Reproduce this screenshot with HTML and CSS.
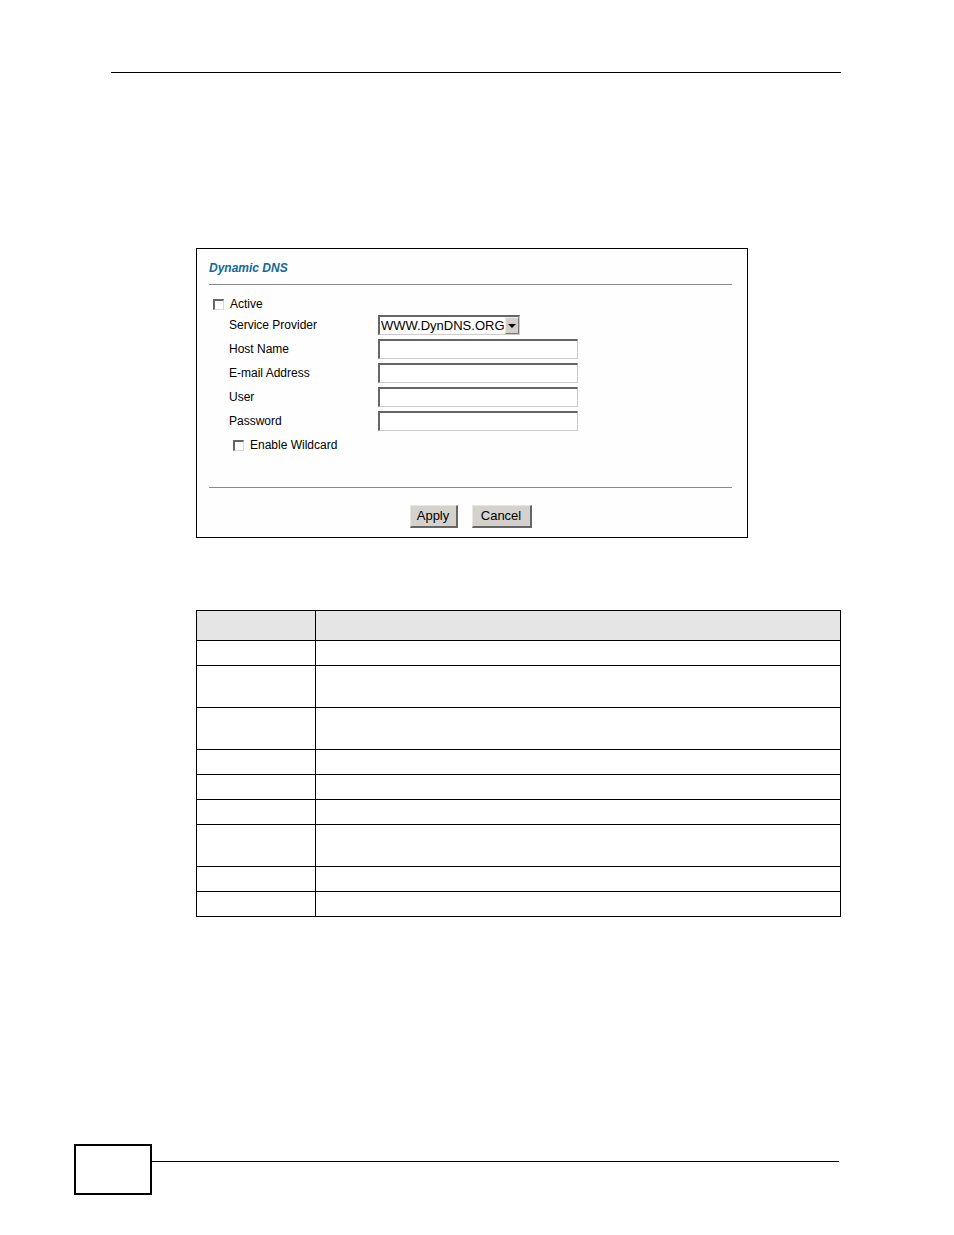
FILE: index.html
```html
<!DOCTYPE html>
<html lang="en">
<head>
<meta charset="utf-8">
<title>Dynamic DNS</title>
<link rel="stylesheet" href="styles.css">
</head>
<body>
<header class="page-header"></header>
<main class="content">
  <form class="panel">
    <h1 class="panel-title">Dynamic DNS</h1>
    <div class="panel-body">
      <div class="check-row">
        <input class="checkbox" type="checkbox" id="active">
        <label for="active">Active</label>
      </div>
      <div class="fields">
        <div class="field">
          <label for="provider">Service Provider</label>
          <span class="select-box">
            <select class="select" id="provider"><option>WWW.DynDNS.ORG</option></select>
            <svg class="select-arrow" viewBox="0 0 14 17" aria-hidden="true">
              <rect width="14" height="17" fill="#d4d0c8"/>
              <path d="M0.5 16.5V0.5H13.5" fill="none" stroke="#eeeeee"/>
              <path d="M0.5 16.5H13.5V0.5" fill="none" stroke="#777777"/>
              <path d="M3 7H11L7 11Z" fill="#000000"/>
            </svg>
          </span>
        </div>
        <div class="field">
          <label for="host">Host Name</label>
          <input class="text-input" type="text" id="host">
        </div>
        <div class="field">
          <label for="email">E-mail Address</label>
          <input class="text-input" type="text" id="email">
        </div>
        <div class="field">
          <label for="user">User</label>
          <input class="text-input" type="text" id="user">
        </div>
        <div class="field">
          <label for="password">Password</label>
          <input class="text-input" type="password" id="password">
        </div>
      </div>
      <div class="check-row check-row-nested">
        <input class="checkbox" type="checkbox" id="wildcard">
        <label for="wildcard">Enable Wildcard</label>
      </div>
    </div>
    <div class="actions">
      <button class="button" type="button">Apply</button>
      <button class="button button-wide" type="button">Cancel</button>
    </div>
  </form>
  <table class="reference">
    <colgroup><col class="label-col"><col></colgroup>
    <thead>
      <tr class="head-row"><th></th><th></th></tr>
    </thead>
    <tbody>
      <tr><td></td><td></td></tr>
      <tr class="tall"><td></td><td></td></tr>
      <tr class="tall"><td></td><td></td></tr>
      <tr><td></td><td></td></tr>
      <tr><td></td><td></td></tr>
      <tr><td></td><td></td></tr>
      <tr class="tall"><td></td><td></td></tr>
      <tr><td></td><td></td></tr>
      <tr><td></td><td></td></tr>
    </tbody>
  </table>
</main>
<footer class="page-footer">
  <div class="page-number"></div>
  <div class="footer-rule"></div>
</footer>
</body>
</html>
```

FILE: styles.css
```css
* {
  box-sizing: border-box;
}

body {
  display: flex;
  flex-direction: column;
  min-height: 100vh;
  margin: 0;
  padding: 72px 113px 40px 111px;
  background: #ffffff;
  color: #000000;
  font: 12px/16px "Liberation Sans", Arial, sans-serif;
}

.page-header {
  border-top: 1px solid #000000;
}

.content {
  flex: 1;
  padding: 175px 0 40px 85px;
}

.panel {
  max-width: 552px;
  padding: 11px 15px 9px 12px;
  border: 1px solid #000000;
  background: #fefefe;
}

.panel-title {
  margin: 0;
  padding-bottom: 8px;
  border-bottom: 1px solid #888888;
  color: #11699c;
  font-size: 12px;
  line-height: 16px;
  font-style: italic;
}

.panel-body {
  padding: 11px 0 34px 4px;
  border-bottom: 1px solid #888888;
}

.check-row {
  display: flex;
  align-items: center;
  gap: 6px;
}

.check-row-nested {
  padding: 6px 0 0 20px;
}

.checkbox {
  appearance: none;
  width: 11px;
  height: 11px;
  margin: 0;
  border: 1px solid #d8d8d8;
  border-top: 2px solid #666666;
  border-left: 2px solid #666666;
  background: #ffffff;
}

.checkbox:checked {
  background: #555555;
}

.fields {
  display: flex;
  flex-direction: column;
  gap: 4px;
  padding: 3px 0 0 16px;
}

.field {
  display: grid;
  grid-template-columns: 149px minmax(0, 1fr);
  align-items: center;
}

.text-input,
.select {
  height: 20px;
  margin: 0;
  border: 1px solid #cccccc;
  border-top: 2px solid #666666;
  border-left: 2px solid #666666;
  border-radius: 0;
  background: #ffffff;
  color: #000000;
  font: 13px/16px "Liberation Sans", Arial, sans-serif;
}

.text-input {
  width: 100%;
  max-width: 200px;
  padding: 0 2px;
}

.select-box {
  position: relative;
  width: 142px;
  height: 20px;
}

.select {
  appearance: none;
  width: 100%;
  padding: 0 0 0 1px;
}

.select-arrow {
  position: absolute;
  top: 2px;
  right: 1px;
  width: 14px;
  height: 17px;
  pointer-events: none;
}

.actions {
  display: flex;
  justify-content: center;
  gap: 14px;
  padding-top: 17px;
}

.button {
  min-width: 48px;
  height: 23px;
  padding: 0;
  border: 1px solid #e8e6e2;
  border-right: 2px solid #666666;
  border-bottom: 2px solid #666666;
  background: #d5d1cd;
  color: #000000;
  font: 13px/16px "Liberation Sans", Arial, sans-serif;
}

.button-wide {
  min-width: 60px;
}

.reference {
  width: 100%;
  margin-top: 72px;
  border-collapse: collapse;
  table-layout: fixed;
}

.label-col {
  width: 119px;
}

.reference tr {
  height: 25px;
}

.reference .head-row {
  height: 30px;
  background: #e5e5e5;
}

.reference .tall {
  height: 42px;
}

.reference th,
.reference td {
  padding: 0;
  border: 1px solid #000000;
}

.page-footer {
  display: flex;
  margin: 0 2px 0 -37px;
}

.page-number {
  width: 78px;
  height: 51px;
  border: 2px solid #000000;
}

.footer-rule {
  flex: 1;
  margin-top: 17px;
  border-top: 1px solid #000000;
}
```
